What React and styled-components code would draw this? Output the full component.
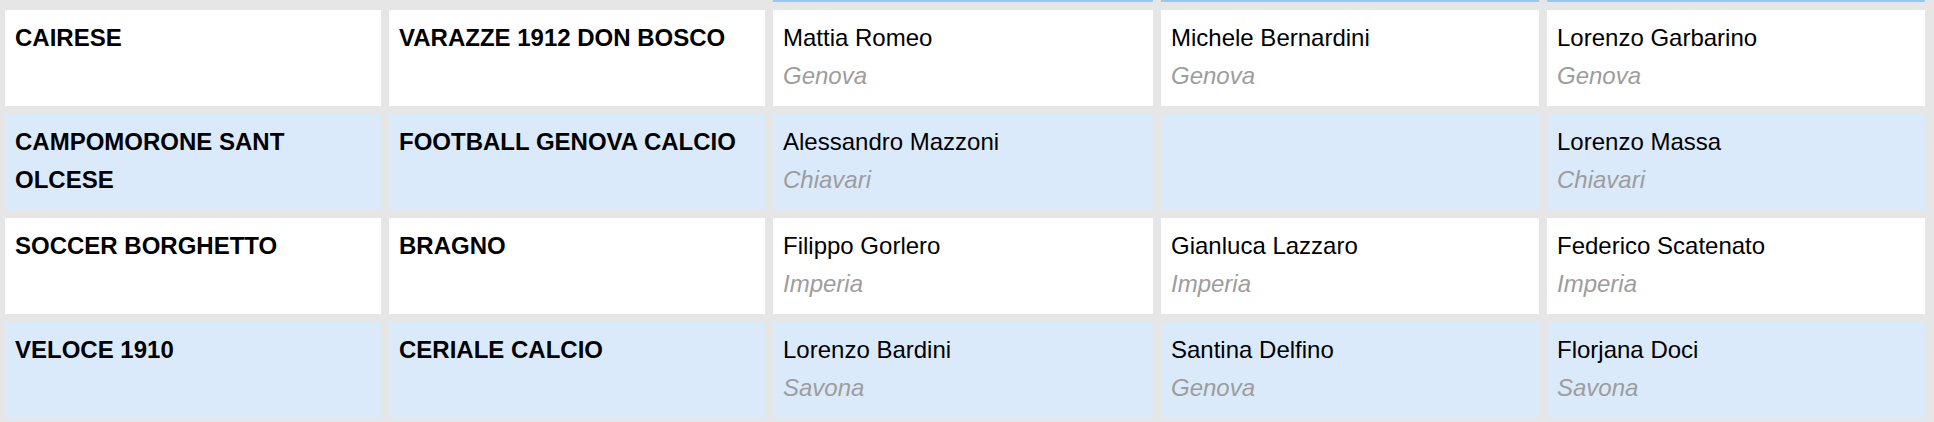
import React from 'react'
import styled, { createGlobalStyle } from 'styled-components'

const GlobalStyle = createGlobalStyle`
    html, body {
        margin: 0;
        padding: 0;
        background-color: #e6e6e6;
        font-family: "Liberation Sans", Arial, sans-serif;
    }
`

const Board = styled.div`
    display: grid;
    grid-template-columns: 376px 376px 380px 378px 378px;
    gap: 8px;
    padding: 0 9px 4px 5px;
    background-color: #e6e6e6;
`

const HeadCell = styled.div`
    height: 2px;
    background-color: ${props => props.filled ? '#98c7f4' : 'transparent'};
`

const Cell = styled.div`
    padding: 9px 10px 11px;
    min-height: 76px;
    background-color: ${props => props.alt ? '#dbeafb' : '#ffffff'};
    font-size: 24px;
    line-height: 38px;
    color: #000;
`

const Team = styled.span`
    font-weight: 700;
    display: block;
`

const Name = styled.span`
    display: block;
`

const City = styled.span`
    display: block;
    font-style: italic;
    color: #9d9d9d;
`

const matches = [
    { home: 'CAIRESE', away: 'VARAZZE 1912 DON BOSCO', refs: [['Mattia Romeo', 'Genova'], ['Michele Bernardini', 'Genova'], ['Lorenzo Garbarino', 'Genova']] },
    { home: 'CAMPOMORONE SANT OLCESE', away: 'FOOTBALL GENOVA CALCIO', refs: [['Alessandro Mazzoni', 'Chiavari'], null, ['Lorenzo Massa', 'Chiavari']] },
    { home: 'SOCCER BORGHETTO', away: 'BRAGNO', refs: [['Filippo Gorlero', 'Imperia'], ['Gianluca Lazzaro', 'Imperia'], ['Federico Scatenato', 'Imperia']] },
    { home: 'VELOCE 1910', away: 'CERIALE CALCIO', refs: [['Lorenzo Bardini', 'Savona'], ['Santina Delfino', 'Genova'], ['Florjana Doci', 'Savona']] },
]

const App = () => {
    return <>
        <GlobalStyle />
        <Board>
            {[false, false, true, true, true].map((f, i) => <HeadCell key={'h' + i} filled={f} />)}
            {matches.map((m, i) => {
                const alt = i % 2 === 1
                return <React.Fragment key={i}>
                    <Cell alt={alt}><Team>{m.home}</Team></Cell>
                    <Cell alt={alt}><Team>{m.away}</Team></Cell>
                    {m.refs.map((r, j) => <Cell alt={alt} key={j}>
                        {r && <><Name>{r[0]}</Name><City>{r[1]}</City></>}
                    </Cell>)}
                </React.Fragment>
            })}
        </Board>
    </>
}

export default App
